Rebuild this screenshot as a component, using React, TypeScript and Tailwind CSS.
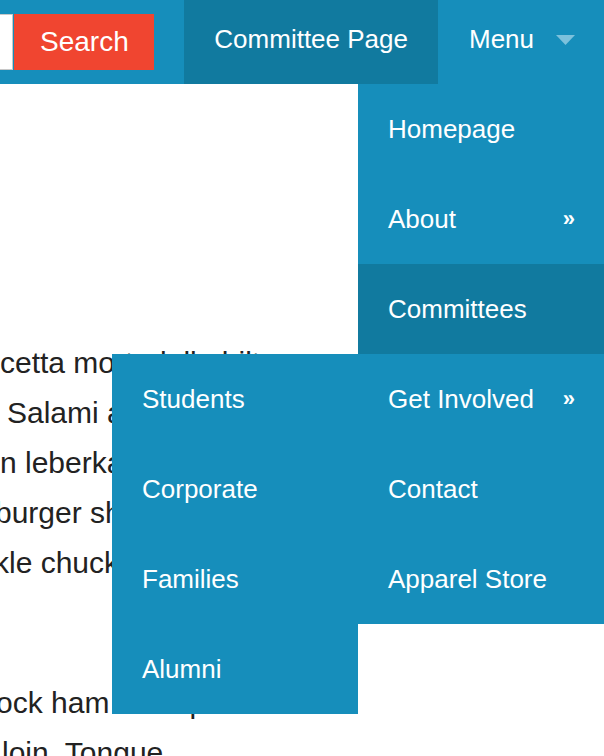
import React from 'react';

const font = { fontFamily: '"Liberation Sans", Arial, sans-serif' };

const MenuItem: React.FC<{ label: string; active?: boolean; more?: boolean }> = ({ label, active, more }) => (
  <a
    href="#"
    className={`flex h-[90px] items-center justify-between pl-[30px] pr-[29px] text-[26px] leading-[30px] text-white ${
      active ? 'bg-[#117a9f]' : 'bg-[#168ebb]'
    }`}
  >
    <span>{label}</span>
    {more && <span className="text-[22px] font-bold leading-none">»</span>}
  </a>
);

const bodyLines = [
  { text: 'cetta mortadella biltong', cls: 'ml-0' },
  { text: 'Salami andouille', cls: 'ml-[7px]' },
  { text: 'n leberkas porchetta', cls: 'ml-0' },
  { text: 'burger short loin', cls: 'ml-[-5px]' },
  { text: 'kle chuck beef ribs', cls: 'ml-[-6px]' },
];

const App: React.FC = () => {
  return (
    <div className="relative h-[756px] w-[604px] overflow-hidden bg-white" style={font}>
      {/* Top bar */}
      <nav className="flex h-[84px] items-stretch justify-end overflow-hidden bg-[#168ebb] text-white">
        <form className="flex shrink-0 items-center" onSubmit={(e) => e.preventDefault()}>
          <input
            type="text"
            className="h-[56px] w-[160px] shrink-0 border border-[#c8c8c8] bg-white px-3 text-[20px] outline-none"
          />
          <button
            type="submit"
            className="ml-[1px] h-[56px] w-[140px] shrink-0 bg-[#f04530] text-[28px] leading-none text-white"
          >
            Search
          </button>
        </form>
        <a href="#" className="ml-[30px] flex shrink-0 items-center bg-[#117a9f] px-[30px] pb-[6px] text-[26px]">
          Committee Page
        </a>
        <div className="relative flex w-[166px] shrink-0 items-center pb-[6px] pl-[31px] text-[26px]">
          <span>Menu</span>
          <svg className="ml-[22px] mt-[2px] h-[10px] w-[19px]" viewBox="0 0 19 10">
            <polygon points="0,0 19,0 9.5,10" fill="#7cc1dc" />
          </svg>
        </div>
      </nav>

      {/* Page content */}
      <main className="pt-[254px] text-[30px] leading-[50px] text-[#222]">
        <div className="mb-[90px]">
          {bodyLines.map((l) => (
            <div key={l.text} className={`whitespace-nowrap ${l.cls}`}>
              {l.text}
            </div>
          ))}
        </div>
        <div className="whitespace-nowrap ml-[-4px]">ock ham hock pork</div>
        <div className="whitespace-nowrap ml-[2px]">loin. Tongue</div>
      </main>

      {/* Dropdown */}
      <div className="absolute right-0 top-[84px] w-[246px]">
        <MenuItem label="Homepage" />
        <MenuItem label="About" more />
        <MenuItem label="Committees" active />
        <div className="relative">
          <MenuItem label="Get Involved" more />
          <div className="absolute right-full top-0 w-[246px]">
            <MenuItem label="Students" />
            <MenuItem label="Corporate" />
            <MenuItem label="Families" />
            <MenuItem label="Alumni" />
          </div>
        </div>
        <MenuItem label="Contact" />
        <MenuItem label="Apparel Store" />
      </div>
    </div>
  );
};

export default App;
